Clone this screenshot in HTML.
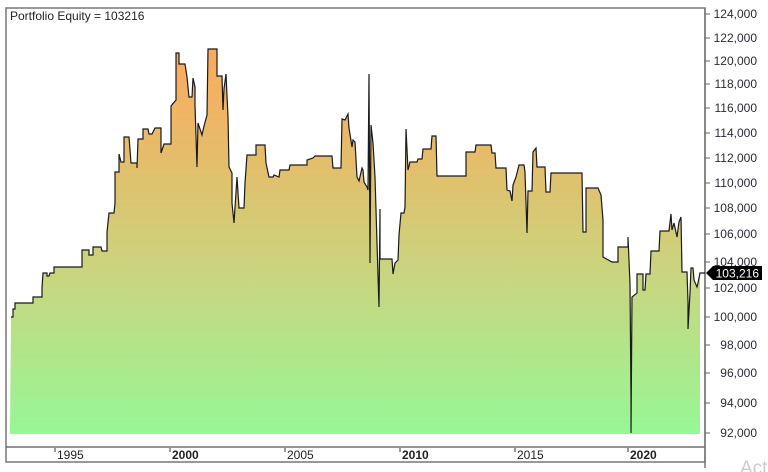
<!DOCTYPE html>
<html><head><meta charset="utf-8"><style>
html,body{margin:0;padding:0;background:#fff;width:768px;height:472px;overflow:hidden}
svg{display:block;font-family:"Liberation Sans",Arial,sans-serif}
</style></head><body>
<svg width="768" height="472" viewBox="0 0 768 472">
<defs>
<linearGradient id="g" gradientUnits="userSpaceOnUse" x1="0" y1="50" x2="0" y2="434">
<stop offset="0" stop-color="#fcaa5c"/>
<stop offset="0.35" stop-color="#dfc26e"/>
<stop offset="0.6" stop-color="#c8d680"/>
<stop offset="1" stop-color="#97f796"/>
</linearGradient>
</defs>
<rect x="6" y="8" width="699" height="454" fill="#fff" stroke="#777" stroke-width="1.5"/>
<line x1="6" y1="447" x2="705" y2="447" stroke="#555" stroke-width="1.2"/>
<line x1="705" y1="8" x2="705" y2="468" stroke="#777" stroke-width="1.5"/>
<text x="10" y="20" font-size="12" fill="#222">Portfolio Equity = 103216</text>
<path fill="url(#g)" d="M10,434 L11,317 13,317 13,309 15,309 15,303 33,303 33,297 42,297 42,288 43,273 47,273 47,276 49,276 50,273 54,273 54,267 82,267 82,250 89,250 89,255 93,255 93,247 101,247 102,251 107,251 107,232 109,213 114,213 115,203 115,172 119,172 119,154 121,162 124,162 124,137 129,137 131,163 137,163 137,168 138,139 143,139 143,129 148,129 149,134 152,134 155,128 161,128 161,153 164,144 171,144 171,106 176,100 176,53 179,53 179,64 185,64 187,77 189,97 192,97 193,78 195,87 195,105 197,167 198,123 202,135 204,126 207,115 208,49 217,49 217,76 222,76 223,110 224,89 226,74 228,117 229,167 232,173 232,203 234,223 237,177 239,208 244,208 245,183 247,155 256,155 256,145 265,145 266,163 269,177 273,177 274,175 279,177 280,170 289,170 290,165 307,165 307,160 313,158 315,156 332,156 333,168 341,168 342,119 345,120 348,114 349,128 352,147 353,140 355,142 357,177 359,181 362,168 363,170 364,182 367,187 368,190 369,74 370,263 371,125 373,143 375,177 377,243 379,307 380,209 380,259 392,259 393,274 395,263 398,260 399,235 401,213 404,213 405,207 406,129 408,170 410,162 417,162 418,159 422,159 423,149 431,149 432,136 436,136 437,176 466,176 466,152 475,152 476,145 491,145 492,153 495,153 496,168 506,168 507,190 510,191 512,201 513,185 516,177 519,165 524,165 525,172 527,233 528,191 532,191 533,152 536,148 537,167 545,167 546,192 550,192 551,173 582,173 583,232 586,232 586,188 598,188 601,195 603,220 603,257 612,262 618,262 618,247 628,247 628,237 630,284 631,397 631,433 632,297 637,293 637,274 643,274 643,290 645,290 646,274 650,274 651,251 659,251 660,231 669,231 671,214 672,230 674,223 677,237 679,222 681,217 682,272 687,272 688,302 688,329 690,293 691,268 693,268 694,280 697,287 698,283 700,273 L700,434 Z"/>
<path fill="none" stroke="#1a1a1a" stroke-width="1.2" d="M11,317 13,317 13,309 15,309 15,303 33,303 33,297 42,297 42,288 43,273 47,273 47,276 49,276 50,273 54,273 54,267 82,267 82,250 89,250 89,255 93,255 93,247 101,247 102,251 107,251 107,232 109,213 114,213 115,203 115,172 119,172 119,154 121,162 124,162 124,137 129,137 131,163 137,163 137,168 138,139 143,139 143,129 148,129 149,134 152,134 155,128 161,128 161,153 164,144 171,144 171,106 176,100 176,53 179,53 179,64 185,64 187,77 189,97 192,97 193,78 195,87 195,105 197,167 198,123 202,135 204,126 207,115 208,49 217,49 217,76 222,76 223,110 224,89 226,74 228,117 229,167 232,173 232,203 234,223 237,177 239,208 244,208 245,183 247,155 256,155 256,145 265,145 266,163 269,177 273,177 274,175 279,177 280,170 289,170 290,165 307,165 307,160 313,158 315,156 332,156 333,168 341,168 342,119 345,120 348,114 349,128 352,147 353,140 355,142 357,177 359,181 362,168 363,170 364,182 367,187 368,190 369,74 370,263 371,125 373,143 375,177 377,243 379,307 380,209 380,259 392,259 393,274 395,263 398,260 399,235 401,213 404,213 405,207 406,129 408,170 410,162 417,162 418,159 422,159 423,149 431,149 432,136 436,136 437,176 466,176 466,152 475,152 476,145 491,145 492,153 495,153 496,168 506,168 507,190 510,191 512,201 513,185 516,177 519,165 524,165 525,172 527,233 528,191 532,191 533,152 536,148 537,167 545,167 546,192 550,192 551,173 582,173 583,232 586,232 586,188 598,188 601,195 603,220 603,257 612,262 618,262 618,247 628,247 628,237 630,284 631,397 631,433 632,297 637,293 637,274 643,274 643,290 645,290 646,274 650,274 651,251 659,251 660,231 669,231 671,214 672,230 674,223 677,237 679,222 681,217 682,272 687,272 688,302 688,329 690,293 691,268 693,268 694,280 697,287 698,283 700,273 705,273"/>
<g stroke="#666" stroke-width="1">
<line x1="705" y1="14" x2="710" y2="14"/><line x1="705" y1="38" x2="710" y2="38"/><line x1="705" y1="61" x2="710" y2="61"/><line x1="705" y1="84" x2="710" y2="84"/><line x1="705" y1="108" x2="710" y2="108"/><line x1="705" y1="133" x2="710" y2="133"/><line x1="705" y1="158" x2="710" y2="158"/><line x1="705" y1="183" x2="710" y2="183"/><line x1="705" y1="208" x2="710" y2="208"/><line x1="705" y1="234" x2="710" y2="234"/><line x1="705" y1="262" x2="710" y2="262"/><line x1="705" y1="288" x2="710" y2="288"/><line x1="705" y1="317" x2="710" y2="317"/><line x1="705" y1="345" x2="710" y2="345"/><line x1="705" y1="373" x2="710" y2="373"/><line x1="705" y1="403" x2="710" y2="403"/><line x1="705" y1="433" x2="710" y2="433"/>
</g>
<g font-size="12" fill="#2a2a3a" text-anchor="end">
<text x="757" y="18">124,000</text><text x="757" y="42">122,000</text><text x="757" y="65">120,000</text><text x="757" y="88">118,000</text><text x="757" y="112">116,000</text><text x="757" y="137">114,000</text><text x="757" y="162">112,000</text><text x="757" y="187">110,000</text><text x="757" y="212">108,000</text><text x="757" y="238">106,000</text><text x="757" y="266">104,000</text><text x="757" y="292">102,000</text><text x="757" y="321">100,000</text><text x="757" y="349">98,000</text><text x="757" y="377">96,000</text><text x="757" y="407">94,000</text><text x="757" y="437">92,000</text>
</g>
<path d="M706,273 L713,266 L762,266 L762,280 L713,280 Z" fill="#000"/>
<text x="759" y="277.5" font-size="12" fill="#fff" text-anchor="end">103,216</text>
<g stroke="#333" stroke-width="1">
<line x1="55" y1="448" x2="55" y2="452"/><line x1="170" y1="448" x2="170" y2="452"/><line x1="285" y1="448" x2="285" y2="452"/><line x1="400" y1="448" x2="400" y2="452"/><line x1="515" y1="448" x2="515" y2="452"/><line x1="628" y1="448" x2="628" y2="452"/>
</g>
<g font-size="12" fill="#222">
<text x="57" y="459">1995</text><text x="172" y="459" font-weight="bold">2000</text><text x="287" y="459">2005</text><text x="402" y="459" font-weight="bold">2010</text><text x="517" y="459">2015</text><text x="630" y="459" font-weight="bold">2020</text>
</g>
<text x="740" y="474" font-size="19" fill="#ccc">Act</text>
</svg>
</body></html>
